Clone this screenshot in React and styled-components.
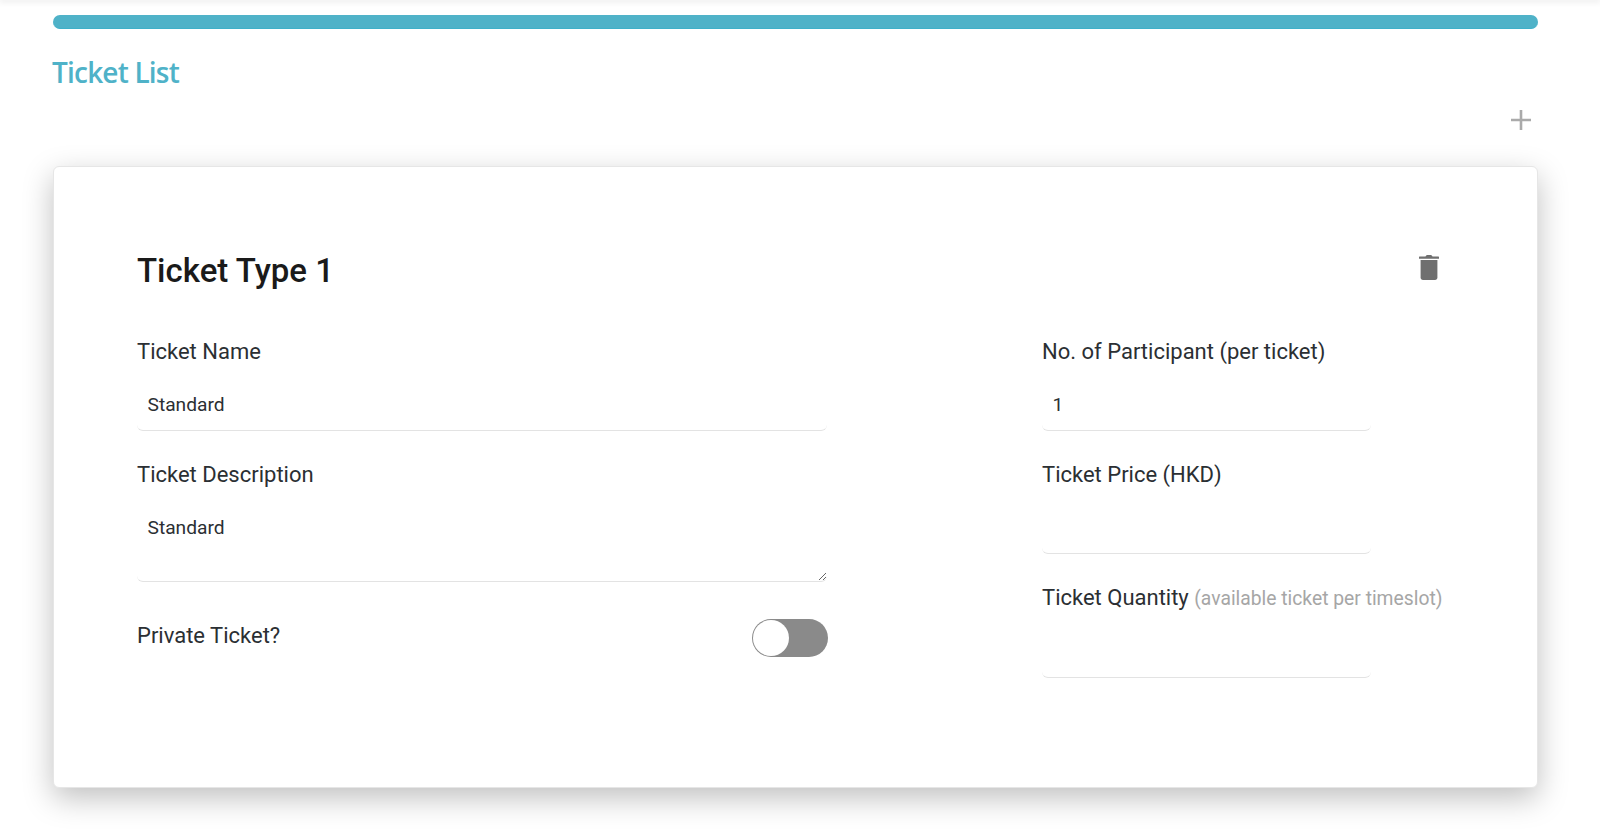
import React from 'react';
import styled, { createGlobalStyle } from 'styled-components';

const GlobalStyle = createGlobalStyle`
  html, body {
    margin: 0;
    padding: 0;
    height: 100%;
    background: #fff;
    font-family: Roboto, "Liberation Sans", sans-serif;
    color: #212529;
  }
`;

const TopShade = styled.div`
  height: 0;
  box-shadow: 0 0 6px 1px rgba(0, 0, 0, 0.18);
`;

const Page = styled.div`
  padding: 15px 62px 0 53px;
`;

const ProgressBar = styled.div`
  height: 14px;
  border-radius: 7px;
  background: #4fb2c8;
  border-bottom: 1px solid #3fb0c9;
  box-sizing: border-box;
`;

const PageTitle = styled.h2`
  margin: 24px 0 0 -1px;
  font-family: "Open Sans", sans-serif;
  font-size: 28px;
  line-height: 38px;
  font-weight: 600;
  letter-spacing: -0.8px;
  color: #4fb2c8;
`;

const Toolbar = styled.div`
  display: flex;
  justify-content: flex-end;
  padding-right: 6px;
  margin-top: 18px;
  height: 57px;
`;

const AddButton = styled.button`
  border: 0;
  padding: 0;
  width: 22px;
  height: 22px;
  background: none;
  color: #aaa;
  display: block;
`;

const Card = styled.section`
  border: 1px solid #e6e6e6;
  border-radius: 6px;
  background: #fff;
  box-shadow: 0 10px 30px rgba(0, 0, 0, 0.25);
  padding: 85px 97px 80px 83px;
  box-sizing: border-box;
`;

const CardHead = styled.header`
  display: flex;
  justify-content: space-between;
  align-items: flex-start;
  margin-bottom: 47px;
`;

const CardTitle = styled.h3`
  margin: 0;
  font-size: 33px;
  line-height: 38px;
  font-weight: 470;
  color: #1a1a1a;
`;

const TrashButton = styled.button`
  border: 0;
  padding: 0;
  margin: 3px 1px 0 0;
  background: none;
  color: #6f6f6f;
  line-height: 0;
`;

const Columns = styled.div`
  display: grid;
  grid-template-columns: 690px 329px;
  column-gap: 215px;
`;

const Column = styled.div`
  display: flex;
  flex-direction: column;
`;

const Field = styled.div`
  margin-bottom: 29px;
`;

const Label = styled.label`
  display: block;
  font-size: 22px;
  line-height: 30px;
  font-weight: 380;
  white-space: nowrap;
  margin-bottom: 13px;
  color: #2b2f33;
`;

const Hint = styled.span`
  font-size: 19.3px;
  font-weight: 400;
  color: #a6a6a6;
`;

const Input = styled.input`
  display: block;
  width: 100%;
  height: 51px;
  box-sizing: border-box;
  padding: 0 10.5px 2px;
  border: 0;
  border-bottom: 1px solid #e3e3e3;
  border-radius: 6px;
  font-family: inherit;
  font-size: 19.2px;
  color: #2b2f33;
  outline: none;
`;

const TextArea = styled.textarea`
  display: block;
  width: 100%;
  height: 79px;
  box-sizing: border-box;
  padding: 13px 10.5px;
  border: 0;
  border-bottom: 1px solid #e3e3e3;
  border-radius: 6px;
  font-family: inherit;
  font-size: 19.2px;
  line-height: 24px;
  color: #2b2f33;
  outline: none;
`;

const SwitchRow = styled.div`
  display: flex;
  justify-content: space-between;
  align-items: flex-start;
  margin-top: 10px;
`;

const SwitchTrack = styled.div`
  width: 76px;
  height: 38px;
  margin: -2px -1px 0 0;
  box-sizing: border-box;
  border-radius: 19px;
  background: ${props => (props.$on ? '#4fb2c8' : '#8a8a8a')};
  display: flex;
  justify-content: ${props => (props.$on ? 'flex-end' : 'flex-start')};
  padding: 1px;
`;

const SwitchKnob = styled.div`
  width: 36px;
  height: 36px;
  border-radius: 50%;
  background: #fff;
`;

const PlusIcon = () => (
  <svg width="22" height="22" viewBox="0 0 22 22">
    <path d="M11 1v20M1 11h20" stroke="currentColor" strokeWidth="2.6" fill="none" />
  </svg>
);

const TrashIcon = () => (
  <svg width="20" height="25" viewBox="0 0 20 25" fill="currentColor">
    <path d="M6.5 1.6C6.8.6 7.6 0 8.6 0h2.8c1 0 1.8.6 2.1 1.6h6c.3 0 .5.2.5.5v1.7H0V2.1c0-.3.2-.5.5-.5z" />
    <path d="M1.6 5h16.8v17.6c0 1.4-1 2.4-2.4 2.4H4c-1.4 0-2.4-1-2.4-2.4z" />
  </svg>
);

export default function App() {
  return (
    <>
      <GlobalStyle />
      <TopShade />
      <Page>
        <ProgressBar />
        <PageTitle>Ticket List</PageTitle>
        <Toolbar>
          <AddButton aria-label="Add ticket"><PlusIcon /></AddButton>
        </Toolbar>
        <Card>
          <CardHead>
            <CardTitle>Ticket Type 1</CardTitle>
            <TrashButton aria-label="Delete ticket"><TrashIcon /></TrashButton>
          </CardHead>
          <Columns>
            <Column>
              <Field>
                <Label>Ticket Name</Label>
                <Input defaultValue="Standard" />
              </Field>
              <Field>
                <Label>Ticket Description</Label>
                <TextArea defaultValue="Standard" />
              </Field>
              <SwitchRow>
                <Label>Private Ticket?</Label>
                <SwitchTrack><SwitchKnob /></SwitchTrack>
              </SwitchRow>
            </Column>
            <Column>
              <Field>
                <Label>No. of Participant (per ticket)</Label>
                <Input defaultValue="1" />
              </Field>
              <Field>
                <Label>Ticket Price (HKD)</Label>
                <Input />
              </Field>
              <Field>
                <Label>Ticket Quantity <Hint>(available ticket per timeslot)</Hint></Label>
                <Input />
              </Field>
            </Column>
          </Columns>
        </Card>
      </Page>
    </>
  );
}
